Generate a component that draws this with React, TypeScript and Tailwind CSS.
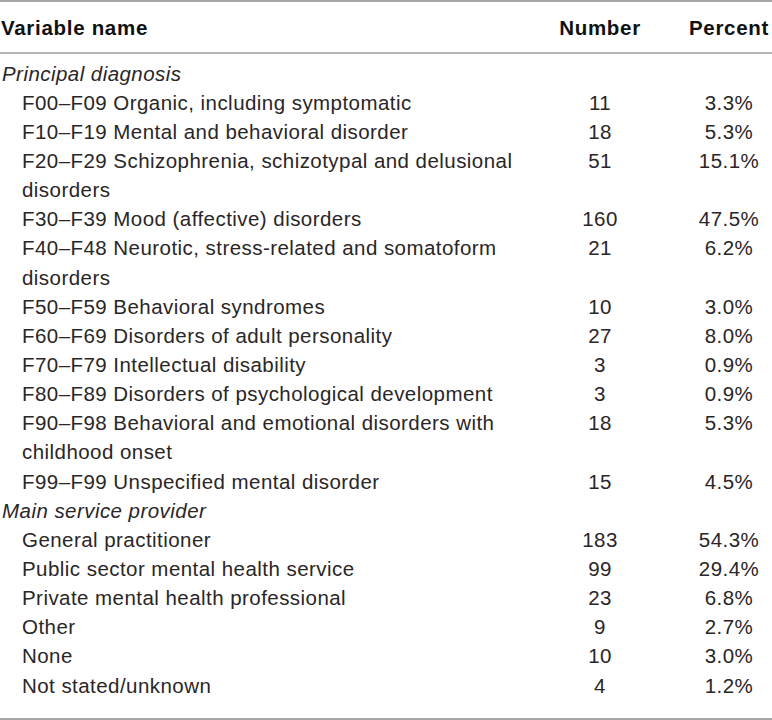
import React from "react";

type Row =
  | { kind: "section"; label: string }
  | { kind: "item"; label: string; n: string; pct: string };

const rows: Row[] = [
  { kind: "section", label: "Principal diagnosis" },
  { kind: "item", label: "F00–F09 Organic, including symptomatic", n: "11", pct: "3.3%" },
  { kind: "item", label: "F10–F19 Mental and behavioral disorder", n: "18", pct: "5.3%" },
  { kind: "item", label: "F20–F29 Schizophrenia, schizotypal and delusional disorders", n: "51", pct: "15.1%" },
  { kind: "item", label: "F30–F39 Mood (affective) disorders", n: "160", pct: "47.5%" },
  { kind: "item", label: "F40–F48 Neurotic, stress-related and somatoform disorders", n: "21", pct: "6.2%" },
  { kind: "item", label: "F50–F59 Behavioral syndromes", n: "10", pct: "3.0%" },
  { kind: "item", label: "F60–F69 Disorders of adult personality", n: "27", pct: "8.0%" },
  { kind: "item", label: "F70–F79 Intellectual disability", n: "3", pct: "0.9%" },
  { kind: "item", label: "F80–F89 Disorders of psychological development", n: "3", pct: "0.9%" },
  { kind: "item", label: "F90–F98 Behavioral and emotional disorders with childhood onset", n: "18", pct: "5.3%" },
  { kind: "item", label: "F99–F99 Unspecified mental disorder", n: "15", pct: "4.5%" },
  { kind: "section", label: "Main service provider" },
  { kind: "item", label: "General practitioner", n: "183", pct: "54.3%" },
  { kind: "item", label: "Public sector mental health service", n: "99", pct: "29.4%" },
  { kind: "item", label: "Private mental health professional", n: "23", pct: "6.8%" },
  { kind: "item", label: "Other", n: "9", pct: "2.7%" },
  { kind: "item", label: "None", n: "10", pct: "3.0%" },
  { kind: "item", label: "Not stated/unknown", n: "4", pct: "1.2%" },
];

const cols = "grid grid-cols-[514px_172px_86px] items-start";

export default function App() {
  return (
    <div className="flex h-[720px] w-[772px] flex-col border-y-2 border-[#a8a8a8] bg-white font-['Liberation_Sans','Helvetica',sans-serif] text-[20.5px] tracking-[0.45px] text-[#2a2627]">
      {/* Header */}
      <div className={`${cols} border-b-2 border-[#b4b4b4] pb-[10.5px] pt-[10.5px] font-bold leading-[29px] tracking-[0.7px] text-[#111]`}>
        <div className="pl-px">Variable name</div>
        <div className="text-center">Number</div>
        <div className="text-center">Percent</div>
      </div>

      {/* Body */}
      <div className="flex-1 pt-[4.6px] leading-[29.14px]">
        {rows.map((r, i) =>
          r.kind === "section" ? (
            <div key={i} className="pl-[2px] italic">
              {r.label}
            </div>
          ) : (
            <div key={i} className={cols}>
              <div className="-mr-[14px] pl-[22px]">{r.label}</div>
              <div className="text-center">{r.n}</div>
              <div className="text-center">{r.pct}</div>
            </div>
          ),
        )}
      </div>
    </div>
  );
}
